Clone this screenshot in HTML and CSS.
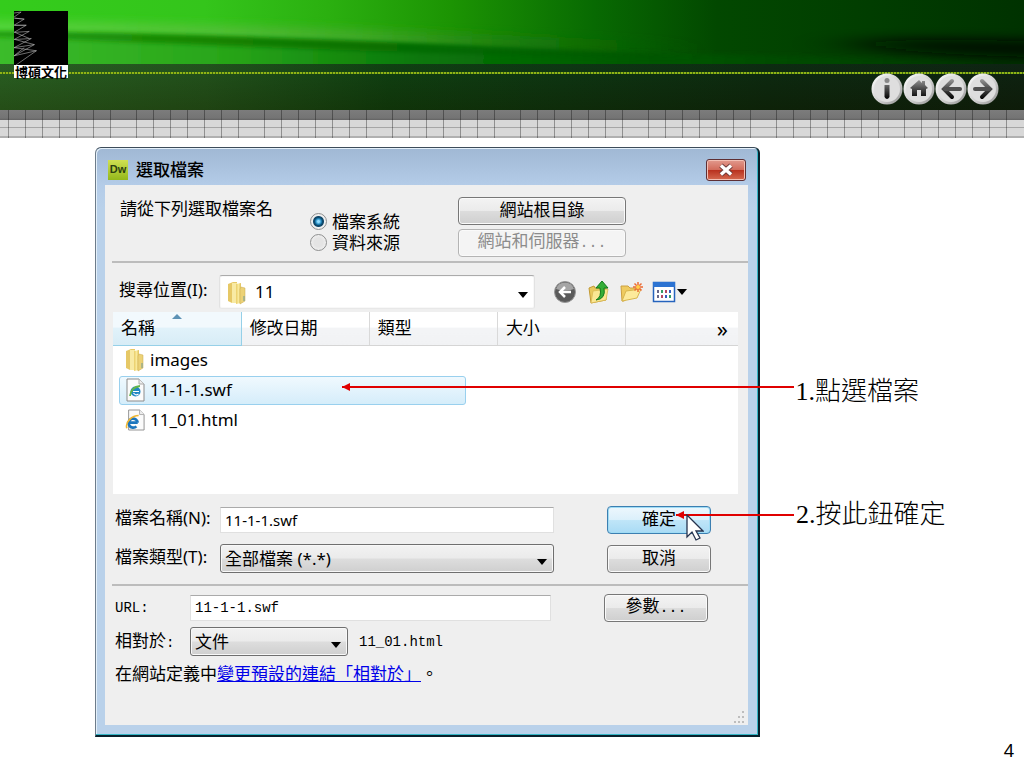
FILE: index.html
```
<!DOCTYPE html>
<html lang="zh-Hant">
<head>
<meta charset="utf-8">
<title>選取檔案</title>
<link rel="stylesheet" href="styles.css">
</head>
<body>
<header class="banner">
  <svg class="banner-art" viewBox="0 0 1024 64" preserveAspectRatio="none" aria-hidden="true">
    <defs>
      <linearGradient id="base"><stop offset="0" stop-color="#34cc1c"/><stop offset=".2" stop-color="#34c51b"/><stop offset=".32" stop-color="#2bb010"/><stop offset=".44" stop-color="#1c9403"/><stop offset=".58" stop-color="#086a02"/><stop offset=".7" stop-color="#024800"/><stop offset="1" stop-color="#003200"/></linearGradient>
      <linearGradient id="glow"><stop offset="0" stop-color="#54d83c"/><stop offset=".35" stop-color="#50c034"/><stop offset=".55" stop-color="#3da824"/><stop offset=".75" stop-color="#1a7d0a"/><stop offset="1" stop-color="#055004" stop-opacity="0"/></linearGradient>
      <linearGradient id="low"><stop offset="0" stop-color="#3fc02e"/><stop offset=".25" stop-color="#27a418"/><stop offset=".42" stop-color="#087608"/><stop offset=".6" stop-color="#035a03"/><stop offset=".85" stop-color="#014001"/><stop offset="1" stop-color="#002a00"/></linearGradient>
      <linearGradient id="seam"><stop offset="0" stop-color="#25a00f"/><stop offset=".3" stop-color="#178704"/><stop offset=".6" stop-color="#066c03"/><stop offset="1" stop-color="#024802" stop-opacity="0"/></linearGradient>
      <filter id="soft" x="-5%" y="-100%" width="110%" height="300%"><feGaussianBlur stdDeviation="8 4"/></filter>
      <filter id="fine" x="-5%" y="-100%" width="110%" height="300%"><feGaussianBlur stdDeviation="8 2"/></filter>
      <filter id="wide" x="-40%" y="-100%" width="180%" height="300%"><feGaussianBlur stdDeviation="34 6"/></filter>
    </defs>
    <rect width="1024" height="64" fill="url(#base)"/>
    <path d="M-40 20C200 22 400 30 700 44V56C400 50 200 38-40 34Z" fill="url(#glow)" filter="url(#soft)"/>
    <path d="M-40 36C200 36 360 46 680 54L1064 62V84H-40Z" fill="url(#low)" filter="url(#fine)"/>
    <path d="M-40 31C200 32 360 42 700 54V59C360 54 200 43-40 36Z" fill="url(#seam)" filter="url(#fine)"/>
    <path d="M860 40C940 38 1000 40 1100 42V58C1000 58 920 54 860 46Z" fill="#000700" filter="url(#wide)"/>
  </svg>
  <div class="banner-band"></div>
  <div class="banner-shadow"></div>
  <div class="banner-grid"></div>
  <div class="logo">
    <svg viewBox="0 0 53 53" aria-hidden="true"><rect width="53" height="53"/><path d="M0 2 7 1 0 6M1 7 10 8 0 14 12 14 0 21 15 20 0 28 17 27 0 36 20 33 0 44 22 39 2 53M0 7 10 8M1 14 12 14M1 21 15 27M1 28 20 33M0 36 22 39M0 44 10 36" fill="none" stroke="#b5b5b5" stroke-width=".6"/></svg>
    <span class="logo-name">博碩文化</span>
  </div>
  <nav class="nav">
    <a href="#info" aria-label="資訊"><svg viewBox="0 0 32 32"><circle cx="16" cy="16" r="15.5" fill="url(#disc)"/><circle cx="16" cy="16" r="13" fill="#dedede"/><circle cx="16" cy="7.500" r="2.500" fill="#888"/><path d="M13.500 12h5v12q-2.500 4-5 0z" fill="url(#ink)"/>
      <defs><linearGradient id="disc" x2="1" y2="1"><stop stop-color="#fff"/><stop offset=".55" stop-color="#d0d0d0"/><stop offset="1" stop-color="#8f8f8f"/></linearGradient><linearGradient id="ink" x1="0" y1="6" x2="0" y2="26" gradientUnits="userSpaceOnUse"><stop stop-color="#999"/><stop offset=".5" stop-color="#484848"/><stop offset="1" stop-color="#000"/></linearGradient></defs></svg></a>
    <a href="#home" aria-label="首頁"><svg viewBox="0 0 32 32"><circle cx="16" cy="16" r="15.500" fill="url(#disc)"/><circle cx="16" cy="16" r="13" fill="#dedede"/><path d="M7 15 16 7l3 3V8h3v4l3 3-2 1v7h-5v-6h-4v6H9v-7z" fill="url(#ink)"/></svg></a>
    <a href="#prev" aria-label="上一頁"><svg viewBox="0 0 32 32"><circle cx="16" cy="16" r="15.500" fill="url(#disc)"/><circle cx="16" cy="16" r="13" fill="#dedede"/><path d="M17 8 9 16l8 8" fill="none" stroke="url(#ink)" stroke-width="4" stroke-linecap="round"/><path d="M10 16h15" stroke="#505050" stroke-width="4" stroke-linecap="round"/></svg></a>
    <a href="#next" aria-label="下一頁"><svg viewBox="0 0 32 32"><circle cx="16" cy="16" r="15.500" fill="url(#disc)"/><circle cx="16" cy="16" r="13" fill="#dedede"/><path d="M15 8l8 8-8 8" fill="none" stroke="url(#ink)" stroke-width="4" stroke-linecap="round"/><path d="M8 16h14" stroke="#505050" stroke-width="4" stroke-linecap="round"/></svg></a>
  </nav>
</header>

<svg class="symbols" aria-hidden="true">
  <defs>
    <linearGradient id="paper"><stop stop-color="#e9cd68"/><stop offset=".5" stop-color="#f9e99a"/><stop offset="1" stop-color="#dfc05a"/></linearGradient>
    <symbol id="folder" viewBox="0 0 20 24"><path d="M1 3 6 1h4v21H5l-4-2z" fill="#e6c866"/><path d="M5 2h5v20H5z" fill="#f8eaa4"/><path d="M9 3 14 2v20l-5 1z" fill="url(#paper)"/><path d="M14 6l4 1v13l-5 3V8z" fill="#ecd277" stroke="#cba94d" stroke-width=".5"/><path d="M17 15v5" stroke="#719b9a"/></symbol>
    <symbol id="file-swf" viewBox="0 0 20 24"><path d="M2 1h12l5 5v17H2z" fill="#fbfbfb" stroke="#8b8b8b"/><path d="M14 1v5h5" fill="#eee" stroke="#aaa"/><circle cx="10.500" cy="13.500" r="5" fill="#2187c4"/><path d="M8 13.500h6M13.500 16q-3 2-5-1" stroke="#fff" fill="none" stroke-width="1.200"/><path d="M5 18q1-9 10-10" fill="none" stroke="#63b548" stroke-width="1.800"/></symbol>
    <symbol id="file-html" viewBox="0 0 22 24"><path d="M4 1h12l5 5v17H4z" fill="#fbfbfb" stroke="#8b8b8b"/><path d="M16 1v5h5" fill="#eee" stroke="#aaa"/><path d="M14 15H5.500M14 15a5 5 0 1 0-1.500 4" fill="none" stroke="#1b75bd" stroke-width="3"/><path d="M2 21C0 14 8 7 15 7" fill="none" stroke="#efb632" stroke-width="1.800"/></symbol>
  </defs>
</svg>

<main class="stage">
  <section class="dialog" aria-labelledby="dialog-title">
    <div class="titlebar">
      <span class="app-icon">Dw</span>
      <h1 class="title" id="dialog-title">選取檔案</h1>
      <button class="close" type="button" aria-label="關閉"><svg viewBox="0 0 16 12"><path d="M3.500 2l9 8M12.500 2l-9 8" stroke="#6a3a3a" stroke-width="4.500"/><path d="M3.500 2l9 8M12.500 2l-9 8" stroke="#fff" stroke-width="3"/></svg></button>
    </div>
    <form class="body">
      <fieldset class="source">
        <legend class="source-title">請從下列選取檔案名</legend>
        <div class="radios">
          <label class="radio"><input type="radio" name="source" checked>檔案系統</label>
          <label class="radio"><input type="radio" name="source">資料來源</label>
        </div>
        <div class="source-buttons">
          <button class="btn" type="button">網站根目錄</button>
          <button class="btn" type="button" disabled>網站和伺服器<span class="mono">...</span></button>
        </div>
      </fieldset>

      <div class="lookup">
        <label class="lookup-label" for="folder-select">搜尋位置(I):</label>
        <div class="picker lookup-picker">
          <svg class="picker-icon"><use href="#folder"/></svg>
          <select class="select select-flat" id="folder-select"><option>11</option></select>
        </div>
        <div class="tools">
          <button type="button" aria-label="上一步"><svg viewBox="0 0 24 24"><circle cx="12" cy="12" r="10.500" fill="#5b5b5b" stroke="#989898"/><path d="M3 9a9.500 9.500 0 0 1 18 0q-9 3-18 0" fill="#a5a5a5"/><path d="M12 7l-5 5 5 5M8 12h10" fill="none" stroke="#fff" stroke-width="2.500"/></svg></button>
          <button type="button" aria-label="上層"><svg viewBox="0 0 24 24"><path d="M3 8l5-2 1 2h11v12L5 23z" fill="#e9c95e" stroke="#c39a34"/><path d="M5 23 7 11l15-2-2 11z" fill="#fbe793" stroke="#d8b64d" stroke-width=".7"/><path d="M10 20q6-3 4-12h-4l6-7 6 7h-4q2 11-8 12z" fill="#35ae37" stroke="#137a1c"/></svg></button>
          <button type="button" aria-label="新增資料夾"><svg viewBox="0 0 24 24"><path d="M2 6h7l2 2h8v3L5 21H3z" fill="#efcb60" stroke="#cca040"/><path d="M3 21 7 11l15-2-4 9z" fill="#fdea9b" stroke="#d8b64d"/><path d="M19 2v10M14 7h10M15.500 3.500l7 7M22.500 3.500l-7 7" stroke="#ec6b35" stroke-width="1.500"/><circle cx="19" cy="7" r="2" fill="#ffd04b"/></svg></button>
          <button class="view" type="button" aria-label="檢視"><svg viewBox="0 0 24 24"><rect x="1.500" y="2.500" width="21" height="19" fill="#fff" stroke="#2563bd" stroke-width="1.500"/><path d="M1 2h22v5H1z" fill="#2c73d2"/><path d="M6 10v3M6 15v3" stroke="#668" stroke-width="2"/><path d="M10 10v3M18 15v3" stroke="#369c65" stroke-width="2"/><path d="M14 10v3M10 15v3" stroke="#b74a60" stroke-width="2"/><path d="M18 10v3M14 15v3" stroke="#345fc0" stroke-width="2"/></svg><svg class="caret" viewBox="0 0 10 6"><path d="M0 0h10L5 6z"/></svg></button>
        </div>
      </div>

      <div class="files">
        <table>
          <colgroup><col class="c"><col class="c"><col class="c"><col class="c"><col></colgroup>
          <thead><tr><th class="sorted" scope="col">名稱<svg class="sort" viewBox="0 0 10 6"><path d="M0 6 5 1l5 5z" fill="#5d92b5"/></svg></th><th scope="col">修改日期</th><th scope="col">類型</th><th scope="col">大小</th><th class="more" scope="col">»</th></tr></thead>
          <tbody>
            <tr><td colspan="5"><div class="file"><svg><use href="#folder"/></svg>images</div></td></tr>
            <tr><td colspan="5"><div class="file selected"><svg><use href="#file-swf"/></svg>11-1-1.swf</div></td></tr>
            <tr><td colspan="5"><div class="file"><svg><use href="#file-html"/></svg>11_01.html</div></td></tr>
          </tbody>
        </table>
      </div>

      <div class="naming">
        <label for="file-name">檔案名稱(N):</label>
        <input class="input" id="file-name" type="text" value="11-1-1.swf">
        <button class="btn btn-default" type="button">確定</button>
        <label for="file-type">檔案類型(T):</label>
        <div class="picker"><select class="select" id="file-type"><option>全部檔案 (*.*)</option></select></div>
        <button class="btn" type="button">取消</button>
      </div>

      <div class="linking">
        <div class="link-row">
          <label class="mono" for="url">URL:</label>
          <input class="input mono url" id="url" type="text" value="11-1-1.swf">
          <button class="btn params" type="button">參數<span class="mono">...</span></button>
        </div>
        <div class="link-row">
          <label for="relative">相對於<span class="mono">:</span></label>
          <div class="picker relative-picker"><select class="select" id="relative"><option>文件</option></select></div>
          <span class="mono">11_01.html</span>
        </div>
        <p class="note">在網站定義中<a href="#relative">變更預設的連結「相對於」</a>。</p>
      </div>
      <svg class="grip" viewBox="0 0 12 12" aria-hidden="true"><path d="M9 0h2v2H9zM5 5h2v2H5zM9 5h2v2H9zM1 10h2v2H1zM5 10h2v2H5zM9 10h2v2H9z" fill="#bdbdbd"/></svg>
    </form>
  </section>

  <div class="callout callout-file"><i class="arrow"></i><span>1.點選檔案</span></div>
  <div class="callout callout-ok"><i class="arrow"></i><span>2.按此鈕確定</span></div>
  <svg class="cursor" viewBox="0 0 18 28" aria-hidden="true"><path d="M1 1v22l5-5 4 8 4-2-4-7h7z" fill="#fff" stroke="#26324d" stroke-width="1.300"/></svg>
</main>
<footer class="page-number">4</footer>
</body>
</html>
```

FILE: styles.css
```
* { box-sizing: border-box; }

body {
  margin: 0;
  min-height: 100vh;
  display: flex;
  flex-direction: column;
  background: #fff;
  color: #000;
  font: 17px/20px "Noto Sans", "Noto Sans CJK TC", sans-serif;
  text-spacing-trim: space-all;
}

button, input, select { font: inherit; color: inherit; margin: 0; }
svg { display: block; }
.mono { font-family: "Liberation Mono", "Noto Sans CJK TC", monospace; font-size: 14px; }
.symbols { position: absolute; width: 0; height: 0; }

/* banner */
.banner { position: relative; }
.banner-art { width: 100%; height: 64px; }
.banner-band {
  height: 46px;
  background:
    repeating-linear-gradient(90deg, #8fb416 0 2px, #3f6a10 2px 3px) 0 8px / 100% 2px no-repeat,
    linear-gradient(#ffffff08, #30180030),
    linear-gradient(90deg, #225a1c, #1b4d16 20%, #083a0b 38%, #06300c 55%, #05240a 75%, #061c0b);
}
.banner-shadow, .banner-grid {
  --rules: repeating-linear-gradient(90deg,
    transparent 0 8px, #0005 8px 9px, transparent 9px 25px, #0005 25px 26px,
    transparent 26px 42px, #0005 42px 43px, transparent 43px 59px, #0005 59px 60px,
    transparent 60px 76px, #0005 76px 77px, transparent 77px 93px, #0005 93px 94px,
    transparent 94px 110px, #0005 110px 111px, transparent 111px 128px);
}
.banner-shadow { height: 10px; background: var(--rules), linear-gradient(#7c7c7c, #747474 80%, #626262); }
.banner-grid {
  height: 18px;
  background: var(--rules), linear-gradient(#d8d8d8 7px, #a6a6a6 7px 8px, #d8d8d8 8px 16px, #b0b0b0 16px);
}
.logo { position: absolute; top: 11px; left: 14px; width: 54px; }
.logo-name {
  display: block;
  background: #fff;
  font: 700 13px/13px "Noto Sans CJK TC", sans-serif;
  text-align: center;
  white-space: nowrap;
}
.nav { position: absolute; top: 73px; right: 25px; display: flex; }
.nav svg { width: 32px; height: 32px; }

/* dialog */
.stage {
  position: relative;
  display: grid;
  grid-template-columns: 95fr 665fr 264fr;
  padding-top: 9px;
}
.dialog {
  grid-column: 2;
  padding: 0 10px 10px 9px;
  border: 1px solid #3d4c5a;
  border-width: 1px 2px 2px 1px;
  border-color: #3d4c5a #06202c #06202c #6d7c8a;
  border-radius: 6px 6px 0 0;
  background: linear-gradient(#a0b8d4, #b4cce8 38px, #b9d1ea 60px);
  box-shadow: inset -1px -1px #35b5c5, inset 1px 1px #e4f0fa;
}
.titlebar { display: flex; align-items: center; gap: 8px; height: 37px; padding: 7px 2px 0 3px; }
.app-icon {
  width: 20px;
  height: 20px;
  background: linear-gradient(#d0e052, #94b81b);
  color: #2c4010;
  font: bold 11px/18px "Liberation Sans", sans-serif;
  text-align: center;
}
.title { flex: 1; margin: 0; font-size: 17px; font-weight: 500; line-height: 20px; }
.close {
  display: grid;
  place-items: center;
  width: 40px;
  height: 22px;
  padding: 0;
  border: 1px solid #5e2f34;
  border-radius: 3px;
  background: linear-gradient(#e29a8e, #d26c5c 48%, #b9321f 52%, #d56a50);
  box-shadow: inset 0 0 0 1px #f3c0b5;
}
.close svg { width: 18px; height: 14px; }
.body { position: relative; min-height: 540px; padding: 12px 0 0 7px; background: #efefef; }

.source {
  display: flex;
  align-items: flex-start;
  margin: 0;
  height: 66px;
  padding: 0 122px 0 8px;
  border: 0;
  border-bottom: 2px solid #bcbcbc;
}
.source-title { float: left; width: 190px; padding: 0; line-height: 24px; }
.radios { flex: 1; padding-top: 14px; }
.radio { display: flex; align-items: center; gap: 5px; height: 21px; white-space: nowrap; }
.radio input {
  appearance: none;
  width: 17px;
  height: 17px;
  border: 1px solid #8e8f8f;
  border-radius: 50%;
  background: radial-gradient(circle, #e4e4e4 40%, #f8f8f8);
}
.radio input:checked {
  background: radial-gradient(circle at 50% 50%, #8fdcff 0 1px, #1a7fb5 3px, #11496b 4px 5px, #f0f0f0 6px);
}
.source-buttons { display: grid; gap: 4px; width: 168px; }
.btn {
  height: 28px;
  padding: 0 6px 2px;
  border: 1px solid #777;
  border-radius: 4px;
  background: linear-gradient(#f3f3f3, #ebebeb 48%, #dcdcdc 52%, #cfcfcf);
  box-shadow: inset 0 0 0 1px #fafafa;
  line-height: 20px;
  white-space: nowrap;
}
.btn .mono { font-size: 15px; }
.btn:disabled { border-color: #b4b4b4; background: #f4f4f4; color: #8c8c8c; }
.btn-default {
  border-color: #3c7fb1;
  background: linear-gradient(#edf7fd, #dbf0fb 48%, #bfe5f8 52%, #a9dbf5);
  box-shadow: inset 0 0 0 1px #9fdcf5;
}

/* folder picker */
.picker { position: relative; }
.picker::after {
  content: "";
  position: absolute;
  right: 7px;
  top: 50%;
  border: 5px solid transparent;
  border-top: 6px solid #000;
  border-bottom: 0;
  pointer-events: none;
}
.select {
  appearance: none;
  display: block;
  width: 100%;
  height: 29px;
  padding: 0 24px 0 4px;
  border: 1px solid #6f6f6f;
  border-radius: 3px;
  background: linear-gradient(#f2f2f2, #ebebeb 48%, #dddddd 52%, #cfcfcf);
  box-shadow: inset 0 0 0 1px #f8f8f8;
}
.select-flat { height: 34px; padding-left: 35px; border-color: #ababab #e2e2e2 #e8e8e8; background: #fff; }
.picker-icon { position: absolute; left: 8px; top: 6px; width: 20px; height: 24px; }
.lookup { display: flex; align-items: center; padding: 12px 0 3px 7px; }
.lookup-label { width: 100px; padding-bottom: 4px; white-space: nowrap; }
.lookup-picker { flex: 1; }
.tools { display: flex; gap: 9px; width: 213px; padding-left: 18px; }
.tools button { display: flex; align-items: center; padding: 0; border: 0; background: none; }
.tools svg { width: 24px; height: 24px; }
.tools .caret { width: 10px; height: 6px; margin-left: 1px; }

/* file list */
.files { height: 182px; margin: 0 10px 0 1px; background: #fff; }
table { width: 100%; table-layout: fixed; border-collapse: collapse; }
.c { width: 20.5%; }
th {
  position: relative;
  height: 33px;
  padding: 0 8px;
  border-right: 1px solid #d9d9d9;
  border-bottom: 1px solid #d5d5d5;
  background: linear-gradient(#fff 45%, #f3f4f6 50%, #f1f2f4);
  font-weight: 400;
  text-align: left;
}
.sorted { border-color: #96d0e8; background: linear-gradient(#f2f9fd 45%, #e1f2fa 50%, #d7ecf6); }
.sort { position: absolute; left: 46%; top: 1px; width: 10px; height: 6px; }
.more { border-right: 0; padding-right: 10px; text-align: right; font-size: 22px; }
td { padding: 0 0 1px 6px; }
.file {
  display: flex;
  align-items: center;
  gap: 5px;
  width: 56%;
  height: 29px;
  padding-left: 5px;
  border: 1px solid transparent;
  border-radius: 3px;
}
.file svg { width: 20px; height: 24px; }
.selected { border-color: #99d0ee; background: linear-gradient(#f0f9fe, #d5edfa); }

/* name and type */
.naming {
  display: grid;
  grid-template-columns: 105px 1fr 104px;
  align-items: center;
  row-gap: 10px;
  padding: 12px 37px 11px 3px;
  border-bottom: 2px solid #bcbcbc;
  white-space: nowrap;
}
.naming label { padding-bottom: 4px; }
.naming .input, .naming .picker { margin-right: 53px; }
.input {
  min-width: 0;
  height: 26px;
  padding: 0 4px;
  border: 1px solid #e0e0e0;
  border-top-color: #aaa;
  background: #fff;
}
.naming .input { font-size: 15px; }

/* link settings */
.linking { display: grid; gap: 5px; padding: 8px 40px 0 3px; }
.link-row { display: flex; align-items: center; }
.link-row label { width: 75px; }
.url { flex: 1; margin-right: 53px; }
.params { width: 104px; }
.relative-picker { width: 158px; margin-right: 11px; }
.note { margin: 0; padding-top: 3px; }
.note a { color: #0000e8; }
.grip { position: absolute; right: 3px; bottom: 2px; width: 12px; height: 12px; }

/* callouts */
.callout {
  position: absolute;
  display: flex;
  align-items: center;
  gap: 2px;
  font: 300 26px/30px "Liberation Serif", "Noto Sans CJK TC", serif;
  white-space: nowrap;
}
.callout-file { left: 33.4%; top: 239px; width: 60%; }
.callout-ok { left: 66%; top: 362px; width: 30%; }
.arrow { position: relative; height: 2px; background: #e00000; }
.callout-file .arrow { width: 73.5%; margin-bottom: 10px; }
.callout-ok .arrow { width: 38.5%; }
.arrow::before {
  content: "";
  position: absolute;
  left: 0;
  top: -3px;
  border: 4px solid transparent;
  border-left: 0;
  border-right: 8px solid #e00000;
}
.cursor { position: absolute; left: 67%; top: 376px; width: 18px; height: 28px; }

.page-number { margin-top: auto; padding: 0 10px 8px; text-align: right; font-size: 18px; }
```
